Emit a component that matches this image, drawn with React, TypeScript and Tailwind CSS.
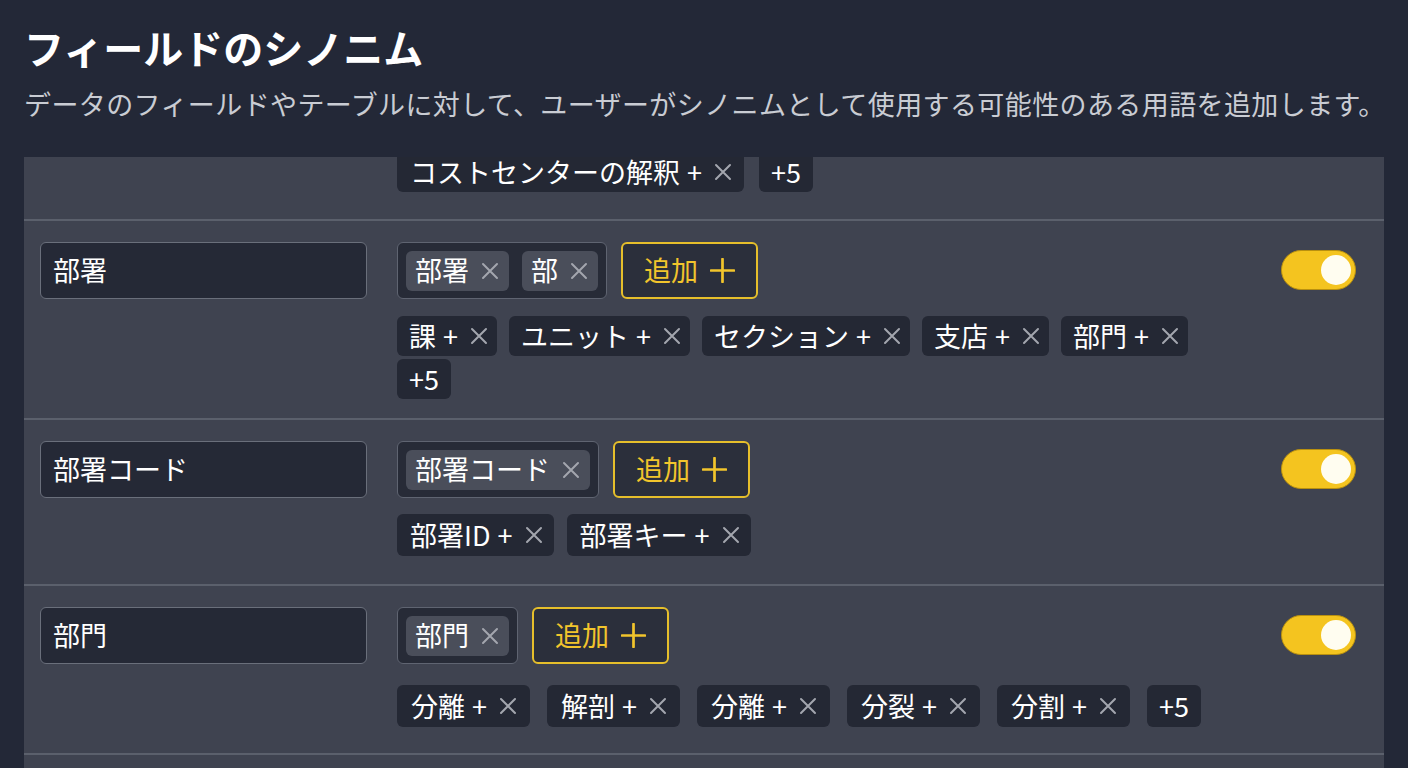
import React from 'react';

type Row = {
  field: string;
  selected: string[];
  suggestions: string[];
  more?: number;
  gap: string; // horizontal gap between suggestion chips
  stack: string; // space between the input line and suggestions
  pb: string;
  chip: string; // suggestion chip sizing
  chipH: string;
};

const rows: Row[] = [
  { field: 'コストセンター', selected: ['コストセンター'], suggestions: ['コストセンターの解釈'], more: 5, gap: 'gap-x-[15px]', stack: 'gap-4', pb: 'pb-[27px]', chip: 'pl-[13px] pr-[12px]', chipH: 'h-[40px]' },
  { field: '部署', selected: ['部署', '部'], suggestions: ['課', 'ユニット', 'セクション', '支店', '部門'], more: 5, gap: 'gap-x-3', stack: 'gap-[17px]', pb: 'pb-[19px]', chip: 'pl-3 pr-[9px]', chipH: 'h-[40px]' },
  { field: '部署コード', selected: ['部署コード'], suggestions: ['部署ID', '部署キー'], gap: 'gap-x-[13px]', stack: 'gap-4', pb: 'pb-[28px]', chip: 'pl-[13px] pr-[11px]', chipH: 'h-[42px]' },
  { field: '部門', selected: ['部門'], suggestions: ['分離', '解剖', '分離', '分裂', '分割'], more: 5, gap: 'gap-x-[17px]', stack: 'gap-[21px]', pb: 'pb-[26px]', chip: 'pl-[14px] pr-[13px]', chipH: 'h-[42px]' },
];

const Cross = ({ className = '' }: { className?: string }) => (
  <svg viewBox="0 0 18 18" className={`w-[18px] h-[18px] ${className}`} fill="none" stroke="currentColor" strokeWidth="2" strokeLinecap="round">
    <path d="M2 2 L16 16 M16 2 L2 16" />
  </svg>
);

const Toggle = () => (
  <div className="w-[75px] h-[40px] rounded-full bg-[#f4c41f] border border-[#b9900f] flex items-center justify-end pr-[4px]">
    <div className="w-[30px] h-[30px] rounded-full bg-[#fffdf0]" />
  </div>
);

const SynonymRow = ({ row, first }: { row: Row; first?: boolean }) => (
  <div className={`flex items-start pl-4 pr-[28px] pt-[21px] ${row.pb} border-b-2 border-[#5b606c] ${first ? '-mt-[99px]' : ''}`}>
    <div className="w-[327px] h-[57px] shrink-0 rounded-md border-[1.5px] border-[#6a6f7b] bg-[#252936] flex items-center px-3 text-[27px] text-white">
      {row.field}
    </div>

    <div className={`flex-1 ml-[30px] flex flex-col ${row.stack}`}>
      <div className="flex items-center gap-[14px]">
        <div className="h-[57px] rounded-md border-[1.5px] border-[#5f6471] bg-[#272b37] flex items-center gap-[13px] px-2">
          {row.selected.map((s, i) => (
            <div key={i} className="h-[40px] rounded-md bg-[#4a4e5a] flex items-center gap-3 pl-[9px] pr-[10px] text-[27px] text-white">
              <span>{s}</span>
              <Cross className="text-[#a3a6ae]" />
            </div>
          ))}
        </div>
        <button className="h-[57px] rounded-md border-2 border-[#e6bf2b] bg-[#2b2f3b] flex items-center gap-3 px-[21px] text-[27px] text-[#f2c52c]">
          <span>追加</span>
          <svg viewBox="0 0 24 24" className="w-[25px] h-[25px]" fill="none" stroke="currentColor" strokeWidth="2.6" strokeLinecap="round">
            <path d="M12 1 V23 M1 12 H23" />
          </svg>
        </button>
      </div>

      <div className={`flex flex-wrap ${row.gap} gap-y-[3px] max-w-[830px]`}>
        {row.suggestions.map((s, i) => (
          <div key={i} className={`${row.chipH} ${row.chip} rounded-md bg-[#242834] flex items-center text-[27px] text-white`}>
            <span>{s}</span>
            <span className="ml-[7px]">+</span>
            <Cross className="ml-[12px] text-[#a3a6ae]" />
          </div>
        ))}
        {row.more ? (
          <div className={`${row.chipH} rounded-md bg-[#242834] flex items-center px-[12px] text-[27px] text-white`}>+{row.more}</div>
        ) : null}
      </div>
    </div>

    <div className="ml-[30px] mt-2 shrink-0">
      <Toggle />
    </div>
  </div>
);

export default function App() {
  return (
    <div className="h-screen w-full overflow-hidden bg-[#232837] px-6 flex flex-col font-['Noto_Sans_CJK_JP','Noto_Sans',sans-serif]">
      <h1 className="pt-[27px] text-[40px] leading-[40px] font-bold text-white">フィールドのシノニム</h1>
      <p className="mt-[19px] text-[27px] leading-[35px] tracking-[0.4px] whitespace-nowrap text-[#c9ccd3]">
        データのフィールドやテーブルに対して、ユーザーがシノニムとして使用する可能性のある用語を追加します。
      </p>
      <div className="mt-[36px] flex-1 overflow-hidden bg-[#3f4350]">
        {rows.map((r, i) => (
          <SynonymRow key={i} row={r} first={i === 0} />
        ))}
      </div>
    </div>
  );
}
